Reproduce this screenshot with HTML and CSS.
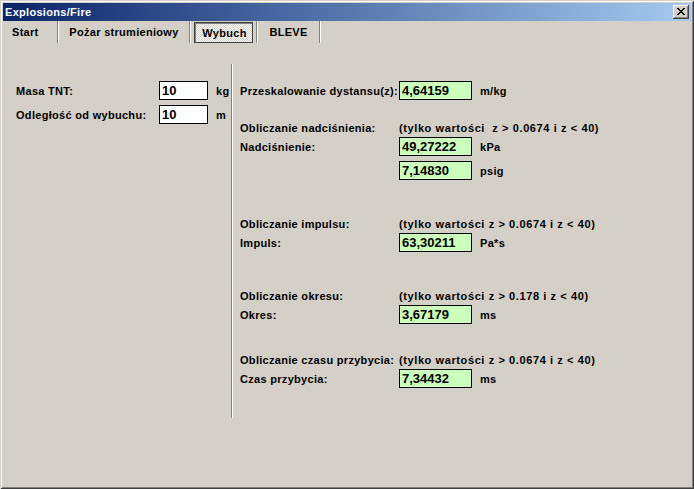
FILE: index.html
```html
<!DOCTYPE html>
<html lang="pl">
<head>
<meta charset="utf-8">
<title>Explosions/Fire</title>
<link rel="stylesheet" href="styles.css">
</head>
<body>
<div class="window">
  <div class="titlebar">
    <span class="title">Explosions/Fire</span>
    <span class="close">
      <svg width="16" height="14" viewBox="0 0 16 14"><path fill="#000" d="M4 3h2v1H4z M10 3h2v1h-2z M5 4h2v1H5z M9 4h2v1H9z M6 5h4v1H6z M7 6h2v1H7z M6 7h4v1H6z M5 8h2v1H5z M9 8h2v1H9z M4 9h2v1H4z M10 9h2v1h-2z"/></svg>
    </span>
  </div>
  <div class="tabs">
    <div class="tab t-start">Start</div>
    <div class="tab t-pozar">Pożar strumieniowy</div>
    <div class="tab t-wybuch"><span class="active">Wybuch</span></div>
    <div class="tab t-bleve">BLEVE</div>
  </div>
  <div class="content">
    <div class="left">
      <div class="lrow"><span class="lbl">Masa TNT:</span><span class="input">10</span><span class="unit">kg</span></div>
      <div class="lrow"><span class="lbl">Odległość od wybuchu:</span><span class="input">10</span><span class="unit">m</span></div>
    </div>
    <div class="sep"></div>
    <div class="right">
      <div class="row"><span class="lbl">Przeskalowanie dystansu(z):</span><span class="box">4,64159</span><span class="unit">m/kg</span></div>

      <div class="row head g-nadc"><span class="lbl">Obliczanie nadciśnienia:</span><span class="note">(tylko wartości&nbsp; z &gt; 0.0674 i z &lt; 40)</span></div>
      <div class="row"><span class="lbl">Nadciśnienie:</span><span class="box">49,27222</span><span class="unit">kPa</span></div>
      <div class="row g-psig"><span class="lbl"></span><span class="box">7,14830</span><span class="unit">psig</span></div>

      <div class="row head g-imp"><span class="lbl">Obliczanie impulsu:</span><span class="note">(tylko wartości z &gt; 0.0674 i z &lt; 40)</span></div>
      <div class="row"><span class="lbl">Impuls:</span><span class="box">63,30211</span><span class="unit">Pa*s</span></div>

      <div class="row head g-okres"><span class="lbl">Obliczanie okresu:</span><span class="note">(tylko wartości z &gt; 0.178 i z &lt; 40)</span></div>
      <div class="row"><span class="lbl">Okres:</span><span class="box">3,67179</span><span class="unit">ms</span></div>

      <div class="row head g-czas"><span class="lbl">Obliczanie czasu przybycia:</span><span class="note">(tylko wartości z &gt; 0.0674 i z &lt; 40)</span></div>
      <div class="row"><span class="lbl">Czas przybycia:</span><span class="box">7,34432</span><span class="unit">ms</span></div>
    </div>
  </div>
</div>
</body>
</html>
```
FILE: styles.css
```css
html, body {
  margin: 0;
  padding: 0;
  background: #d4d0c8;
}

body {
  font: bold 11px "Liberation Sans", Arial, sans-serif;
  letter-spacing: 0.3px;
  color: #000;
}

.window {
  width: 694px;
  height: 489px;
  box-sizing: border-box;
  padding: 3px;
  background: #d4d0c8;
  box-shadow: inset 1px 1px #d4d0c8, inset -1px -1px #404040, inset 2px 2px #fff, inset -2px -2px #808080;
  display: flex;
  flex-direction: column;
}

.titlebar {
  height: 18px;
  flex: none;
  background: linear-gradient(to right, #0a246a, #a6caf0);
  display: flex;
  align-items: center;
  justify-content: space-between;
  padding: 0 2px;
  color: #fff;
}

.title {
  font-size: 11px;
  letter-spacing: 0.3px;
}

.close {
  width: 16px;
  height: 14px;
  background: #d4d0c8;
  box-shadow: inset -1px -1px #404040, inset 1px 1px #fff, inset -2px -2px #808080, inset 2px 2px #d4d0c8;
  display: block;
}

.close svg {
  display: block;
}

.tabs {
  height: 22px;
  flex: none;
  display: flex;
}

.tab {
  box-sizing: border-box;
  height: 22px;
  border-right: 1px solid #808080;
  box-shadow: 1px 0 #fff;
  margin-right: 1px;
  display: flex;
  align-items: center;
  justify-content: center;
}

.t-start {
  width: 55px;
  justify-content: flex-start;
  padding-left: 9px;
}

.t-pozar { width: 131px; }

.t-wybuch {
  width: 66px;
  justify-content: flex-start;
  align-items: stretch;
}

.t-bleve { width: 62px; }

.active {
  box-sizing: border-box;
  margin: 1px 0 0 3px;
  width: 59px;
  height: 21px;
  display: flex;
  align-items: center;
  justify-content: center;
  padding-left: 2px;
  border: 1px solid #404040;
  box-shadow: inset 1px 1px #808080;
  background: conic-gradient(#fff 25%, #d4d0c8 0 50%, #fff 0 75%, #d4d0c8 0) 0 0 / 2px 2px;
}

.content {
  display: flex;
  padding-top: 21px;
}

.left {
  width: 228px;
  box-sizing: border-box;
  padding: 17px 0 0 13px;
  display: flex;
  flex-direction: column;
  gap: 5px;
}

.lrow {
  display: grid;
  grid-template-columns: 143px 49px auto;
  align-items: center;
  height: 19px;
}

.input {
  box-sizing: border-box;
  height: 19px;
  border: 1px solid #000;
  background: #fff;
  padding-left: 2px;
  line-height: 17px;
  font-size: 13px;
  letter-spacing: 0;
}

.unit {
  margin-left: 8px;
}

.sep {
  width: 0;
  height: 354px;
  border-left: 1px solid #808080;
  border-right: 1px solid #fff;
}

.right {
  padding: 17px 0 0 7px;
  display: flex;
  flex-direction: column;
}

.row {
  display: grid;
  grid-template-columns: 159px 73px auto;
  align-items: center;
  height: 19px;
}

.lbl {
  white-space: nowrap;
}

.row.head {
  height: 18px;
}

.note {
  grid-column: 2 / 4;
  white-space: nowrap;
  letter-spacing: 0.6px;
}

.box {
  box-sizing: border-box;
  height: 19px;
  border: 1px solid #000;
  background: #ccffbb;
  padding-left: 2px;
  line-height: 17px;
  font-size: 13px;
  letter-spacing: 0;
}

.g-nadc { margin-top: 19px; }
.g-psig { margin-top: 5px; }
.g-imp { margin-top: 35px; }
.g-okres { margin-top: 35px; }
.g-czas { margin-top: 27px; }
```
